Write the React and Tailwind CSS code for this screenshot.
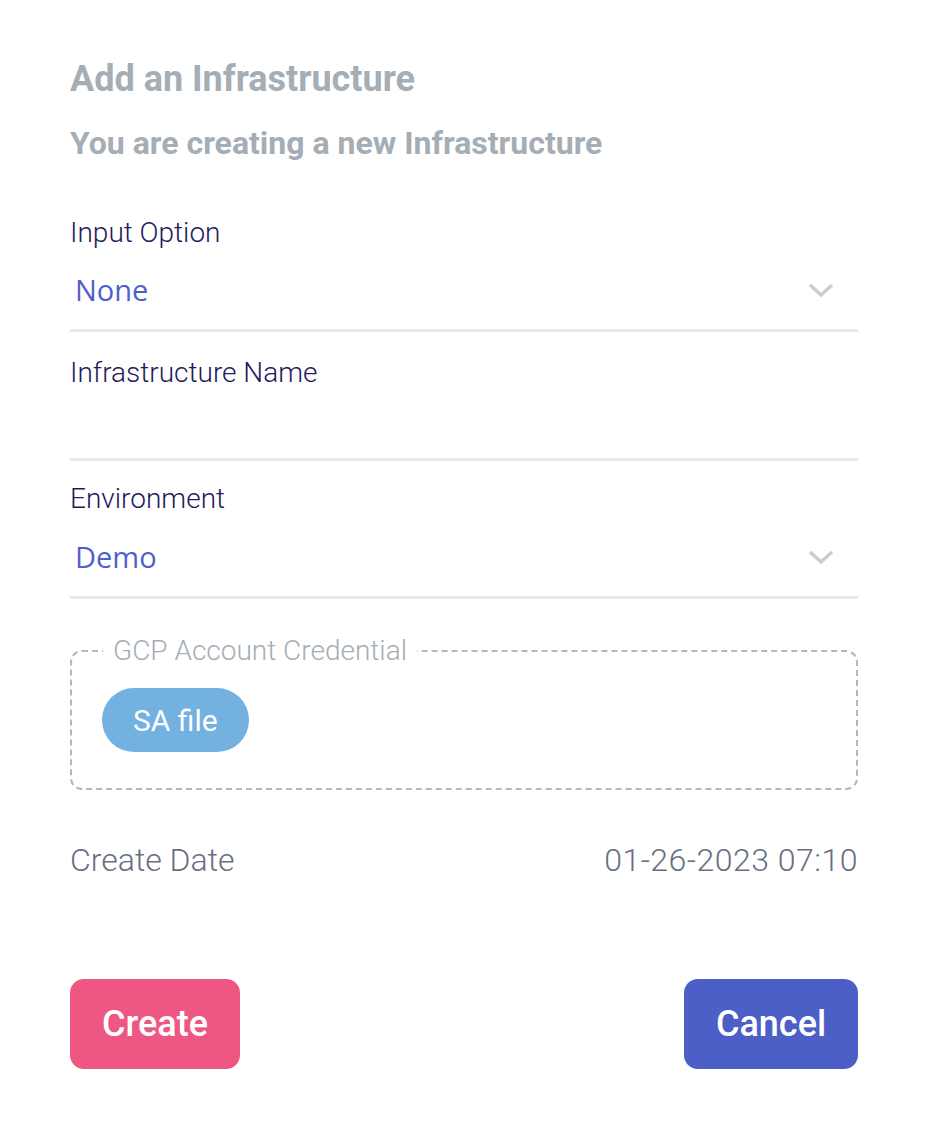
export default function App() {
  return (
    <div className="min-h-screen bg-white" style={{ fontFamily: "Roboto, 'Liberation Sans', sans-serif" }}>
      <div className="px-[70px] pt-[57px] w-[928px]">
        <h1 className="text-[36px] leading-[44px] font-bold text-[#a5adb5]">Add an Infrastructure</h1>
        <h2 className="mt-[22px] text-[32px] leading-[40px] font-bold text-[#a5adb5]">You are creating a new Infrastructure</h2>

        <div className="mt-[52px]">
          <label className="block text-[28px] leading-[36px] font-light text-[#1f1a5c]">Input Option</label>
          <div className="flex items-center justify-between h-[81px] pl-[5px] pr-[24px] border-b-[3px] border-[#e8e8e8]">
            <span className="text-[29px] text-[#4f5fcf] font-['Open_Sans']">None</span>
            <svg width="26" height="16" viewBox="0 0 26 16" fill="none">
              <path d="M2 3 L13 13 L24 3" stroke="#cccccc" strokeWidth="3.5" />
            </svg>
          </div>
        </div>

        <div className="mt-[23px]">
          <label className="block text-[28px] leading-[36px] font-light text-[#1f1a5c]">Infrastructure Name</label>
          <div className="h-[70px] border-b-[3px] border-[#e8e8e8]"></div>
        </div>

        <div className="mt-[20px]">
          <label className="block text-[28px] leading-[36px] font-light text-[#1f1a5c]">Environment</label>
          <div className="flex items-center justify-between h-[82px] pl-[5px] pr-[24px] border-b-[3px] border-[#e8e8e8]">
            <span className="text-[29px] text-[#4f5fcf] font-['Open_Sans']">Demo</span>
            <svg width="26" height="16" viewBox="0 0 26 16" fill="none">
              <path d="M2 3 L13 13 L24 3" stroke="#cccccc" strokeWidth="3.5" />
            </svg>
          </div>
        </div>

        <fieldset className="mt-[36px] border-2 border-dashed border-[#b4b8bd] rounded-[12px] px-[30px] pb-[36px] pt-[21px]">
          <legend className="px-[10px] ml-[1px] text-[28px] leading-[32px] font-light text-[#a5adb5]">GCP Account Credential</legend>
          <button className="h-[64px] px-[31px] rounded-full bg-[#72b1e0] text-white text-[30px]">SA file</button>
        </fieldset>

        <div className="mt-[50px] flex items-center justify-between h-[40px] text-[32px] font-light text-[#676f81]">
          <span>Create Date</span>
          <span className="tracking-[0.5px]">01-26-2023 07:10</span>
        </div>

        <div className="mt-[99px] flex items-center justify-between">
          <button className="w-[170px] h-[90px] rounded-[14px] bg-[#ee5781] text-white text-[36px] font-medium">Create</button>
          <button className="w-[174px] h-[90px] rounded-[14px] bg-[#4c5fc7] text-white text-[36px] font-medium">Cancel</button>
        </div>
      </div>
    </div>
  );
}
